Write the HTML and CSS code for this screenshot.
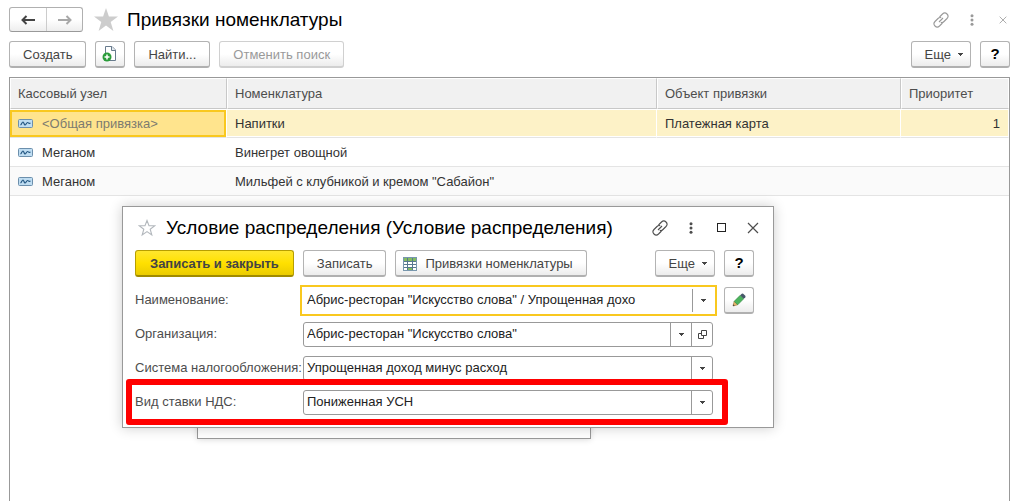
FILE: index.html
```html
<!DOCTYPE html>
<html lang="ru">
<head>
<meta charset="utf-8">
<meta name="viewport" content="width=device-width, initial-scale=1">
<title>Привязки номенклатуры</title>
<link rel="stylesheet" href="styles.css">
</head>
<body>
<svg class="sprite" aria-hidden="true">
  <symbol id="link" viewBox="0 0 16 16"><g fill="none" stroke="currentColor" stroke-width="1.1"><path d="M6.500 5 9.500 2Q11.800-.200 14 2T14 6.500L11 9.500Q9.500 11 7.800 10.300"/><path d="M9.500 11 6.500 14Q4.200 16.200 2 14T2 9.500L5 6.500Q6.500 5 8.200 5.700"/><path d="M6 10 10 6"/></g></symbol>
  <symbol id="dots" viewBox="0 0 4 12"><g fill="currentColor"><circle cx="2" cy="1.7" r="1.5"/><circle cx="2" cy="6" r="1.5"/><circle cx="2" cy="10.3" r="1.5"/></g></symbol>
  <symbol id="cross" viewBox="0 0 12 12"><path d="M1 1 11 11M11 1 1 11" fill="none" stroke="currentColor" stroke-width="1.2"/></symbol>
  <symbol id="caret" viewBox="0 0 5 3"><path d="M0 0H5V1H4V2H3V3H2V2H1V1H0Z" fill="currentColor"/></symbol>
  <symbol id="arrow" viewBox="0 0 14 10"><path d="M1 5H14M5.500 1 1.500 5 5.500 9" fill="none" stroke="currentColor" stroke-width="2"/></symbol>
  <symbol id="record" viewBox="0 0 15 9"><rect x=".5" y=".5" width="14" height="8" rx="1" fill="#bfddf2" stroke="#6c8fac"/><path d="M2.500 6C3.500 5.500 4 3 5 3S6 6 7 6 8.500 3.500 9.500 3.500 10.500 5 12.500 4" fill="none" stroke="#215581" stroke-width="1.200"/></symbol>
</svg>
<main class="page">
  <header class="titlebar">
    <div class="history">
      <button type="button" aria-label="Назад"><svg class="i-arrow"><use href="#arrow"/></svg></button>
      <button type="button" class="forward" aria-label="Вперед"><svg class="i-arrow"><use href="#arrow"/></svg></button>
    </div>
    <svg class="star" viewBox="0 0 24 24"><path d="M12 0 14.900 8.500H24L16.700 13.900 19.400 23 12 17.500 4.600 23 7.300 13.900 0 8.500H9.100Z" fill="#cdcdcd"/></svg>
    <h1>Привязки номенклатуры</h1>
    <div class="window-tools">
      <button type="button" aria-label="Ссылка"><svg class="i-link"><use href="#link"/></svg></button>
      <button type="button" aria-label="Меню"><svg class="i-dots"><use href="#dots"/></svg></button>
      <button type="button" aria-label="Закрыть"><svg class="i-small"><use href="#cross"/></svg></button>
    </div>
  </header>
  <div class="toolbar">
    <button type="button" class="btn">Создать</button>
    <button type="button" class="btn square" aria-label="Создать копированием"><svg class="i-copy" viewBox="0 0 16 16"><path d="M3.500.500H10L13.500 4V14.500H3.500Z" fill="#fff" stroke="#687b8d"/><path d="M9.500.500V4.500H13.500" fill="#e5ebf0" stroke="#687b8d"/><circle cx="5" cy="11" r="4.500" fill="#2a9c3a"/><path d="M2.500 11H7.500M5 8.500V13.500" stroke="#fff" stroke-width="1.500"/></svg></button>
    <button type="button" class="btn">Найти...</button>
    <button type="button" class="btn" disabled>Отменить поиск</button>
    <span class="spacer"></span>
    <button type="button" class="btn more">Еще<svg class="i-caret"><use href="#caret"/></svg></button>
    <button type="button" class="btn square help" aria-label="Справка">?</button>
  </div>
  <div class="list">
    <table>
      <colgroup><col class="c-node"><col class="c-item"><col class="c-object"><col></colgroup>
      <thead><tr><th>Кассовый узел</th><th>Номенклатура</th><th>Объект привязки</th><th>Приоритет</th></tr></thead>
      <tbody>
        <tr class="selected"><td class="active"><svg class="i-record"><use href="#record"/></svg>&lt;Общая привязка&gt;</td><td>Напитки</td><td>Платежная карта</td><td class="num">1</td></tr>
        <tr><td><svg class="i-record"><use href="#record"/></svg>Меганом</td><td>Винегрет овощной</td><td></td><td></td></tr>
        <tr class="even"><td><svg class="i-record"><use href="#record"/></svg>Меганом</td><td>Мильфей с клубникой и кремом "Сабайон"</td><td></td><td></td></tr>
      </tbody>
    </table>
  </div>
</main>

<div class="back-window"></div>
<section class="dialog" role="dialog" aria-labelledby="dialog-title">
  <header class="dialog-title">
    <svg class="star-small" viewBox="0 0 18 18"><path d="M9 1.500 11 6.800H16.800L12.200 10.200 13.800 16 9 12.600 4.200 16 5.800 10.200 1.200 6.800H7Z" fill="none" stroke="#b3b8bd" stroke-width="1.100"/></svg>
    <h2 id="dialog-title">Условие распределения (Условие распределения)</h2>
    <div class="window-tools">
      <button type="button" aria-label="Ссылка"><svg class="i-link"><use href="#link"/></svg></button>
      <button type="button" aria-label="Меню"><svg class="i-dots"><use href="#dots"/></svg></button>
      <button type="button" aria-label="Развернуть"><svg class="i-max" viewBox="0 0 9 9"><rect x=".5" y=".5" width="8" height="8" fill="none" stroke="#222"/></svg></button>
      <button type="button" aria-label="Закрыть"><svg class="i-cross"><use href="#cross"/></svg></button>
    </div>
  </header>
  <div class="toolbar">
    <button type="button" class="btn primary">Записать и закрыть</button>
    <button type="button" class="btn">Записать</button>
    <button type="button" class="btn with-icon"><svg class="i-sheet" viewBox="0 0 14 14"><rect x=".5" y=".5" width="13" height="13" fill="#fff" stroke="#7897ad"/><path d="M1 1H13V4H1Z" fill="#83bd60"/><path d="M5 10H9V13H5Z" fill="#83bd60"/><path d="M1 4.500H13M1 7.500H13M1 10.500H13M4.500 1V13M9.500 1V13" stroke="#58798f"/></svg>Привязки номенклатуры</button>
    <span class="spacer"></span>
    <button type="button" class="btn more">Еще<svg class="i-caret"><use href="#caret"/></svg></button>
    <button type="button" class="btn square help" aria-label="Справка">?</button>
  </div>
  <form class="form">
    <div class="row">
      <label for="name">Наименование:</label>
      <div class="field focused"><input id="name" type="text" value="Абрис-ресторан &quot;Искусство слова&quot; / Упрощенная дохо"><button type="button" aria-label="Выбрать"><svg class="i-caret"><use href="#caret"/></svg></button></div>
      <button type="button" class="btn square" aria-label="Изменить"><svg class="i-pencil" viewBox="0 0 14 14"><path d="M1 13 2.200 8.300 5.700 11.800Z" fill="#e9b96b" stroke="#9a7137" stroke-width=".6"/><path d="M1 13 1.500 11.300 2.700 12.500Z" fill="#333"/><path d="M2.200 8.300 8.200 2.300 11.700 5.800 5.700 11.800Z" fill="#4cb45d" stroke="#2f8540" stroke-width=".6"/><path d="M8.200 2.300 9.800.700Q10.500.200 11.200.700L13.300 2.800Q13.800 3.500 13.300 4.200L11.700 5.800Z" fill="#47586a"/></svg></button>
    </div>
    <div class="row">
      <label for="org">Организация:</label>
      <div class="field"><input id="org" type="text" value="Абрис-ресторан &quot;Искусство слова&quot;"><button type="button" aria-label="Выбрать"><svg class="i-caret"><use href="#caret"/></svg></button><button type="button" aria-label="Открыть"><svg class="i-open" viewBox="0 0 9 9"><path d="M3.500.500H8.500V5.500H3.500ZM3.500 3.500H.500V8.500H5.500V5.500" fill="none" stroke="#444"/></svg></button></div>
    </div>
    <div class="row">
      <label for="tax">Система налогообложения:</label>
      <div class="field"><input id="tax" type="text" value="Упрощенная доход минус расход"><button type="button" aria-label="Выбрать"><svg class="i-caret"><use href="#caret"/></svg></button></div>
    </div>
    <div class="row marked">
      <label for="vat">Вид ставки НДС:</label>
      <div class="field"><input id="vat" type="text" value="Пониженная УСН"><button type="button" aria-label="Выбрать"><svg class="i-caret"><use href="#caret"/></svg></button></div>
    </div>
  </form>
</section>
</body>
</html>
```
FILE: styles.css
```css
* { box-sizing: border-box; }
body { margin: 0; background: #fff; color: #333; font: 13px/16px "Liberation Sans", Arial, sans-serif; overflow: hidden; }
button, input { font: inherit; color: inherit; }
button { padding: 0; border: 0; background: none; }
svg { display: block; flex: none; }
h1, h2 { margin: 0; font-size: 19px; line-height: 24px; font-weight: 400; color: #000; white-space: nowrap; }
.sprite { position: absolute; width: 0; height: 0; }

.page { display: flex; flex-direction: column; height: 100vh; padding: 7px 8px 0 9px; }
.titlebar { display: flex; align-items: center; height: 25px; }
.history { display: flex; height: 25px; border: 1px solid #b0b0b0; border-bottom-color: #999; border-radius: 3px; background: linear-gradient(#fff 50%, #eee); }
.history button { display: grid; place-items: center; width: 36px; color: #444; }
.history .forward { border-left: 1px solid #ccc; color: #a8a8a8; }
.forward svg { transform: scaleX(-1); }
.star { width: 24px; height: 24px; margin: 0 9px 0 11px; }
.window-tools { display: flex; align-items: center; margin-left: auto; color: #4d4d4d; }
.window-tools button { display: grid; place-items: center; width: 31px; height: 24px; }
.titlebar .window-tools { color: #999; margin-right: -8px; }

.toolbar { display: flex; gap: 9px; }
.page .toolbar { margin-top: 9px; }
.spacer { flex: 1; }
.btn { display: flex; align-items: center; justify-content: center; flex: none; height: 27px; padding: 1px 13px 0; border: 1px solid #b3b3b3; border-bottom: 2px solid #b0b0b0; border-radius: 3px; background: linear-gradient(#fff 50%, #ececec); color: #444; white-space: nowrap; }
.btn:disabled { color: #999; border-color: #d0d0d0; }
.square { width: 30px; padding: 0; }
.help { color: #000; font-size: 15px; font-weight: 700; }
.more { gap: 7px; padding: 1px 7px 0 13px; }
.primary { padding: 1px 14px 0; border-color: #b79e00; border-bottom-color: #a08b00; background: linear-gradient(#ffe62e, #ffe000 50%, #ebcc00); font-weight: 700; }
.with-icon { gap: 8px; padding: 1px 13px 0 7px; }

.list { flex: 1; margin-top: 9px; border: 1px solid #999; border-bottom: 0; }
table { width: 100%; table-layout: fixed; border-collapse: separate; border-spacing: 0; }
.c-node { width: 217px; }
.c-item { width: 430px; }
.c-object { width: 244px; }
th, td { text-align: left; font-weight: 400; white-space: nowrap; }
th { height: 31px; border: 1px solid #fff; border-right-color: #c8c8c8; border-bottom-color: #c8c8c8; background: #f1f1f1; color: #4d4d4d; padding: 0 7px; }
th:last-child { border-right-color: #fff; }
td { height: 29px; padding: 2px 8px 0; border-bottom: 1px solid #e4e4e4; }
.selected td { border-right: 1px solid #fff; background: #fdf2c7; box-shadow: inset 0 1px #fff, inset 0 -1px #fff; }
.selected .active { background: #ffe48d; box-shadow: inset 0 1px #fff, inset 0 0 0 2px #f9c81f, inset 0 3px #f9c81f; color: #7d7b70; }
.even td { background: #fafafa; }
.num { text-align: right; }
.i-record { display: inline-block; width: 15px; height: 9px; margin-right: 9px; }

.back-window { position: absolute; left: 197px; top: 400px; width: 394px; height: 39px; border: 1px solid #999; background: #fff; box-shadow: 0 1px 6px #0002; }
.dialog { position: absolute; left: 122px; top: 206px; width: 652px; padding: 0 19px 8px 12px; border: 1px solid #999; background: #fff; box-shadow: 0 0 12px #0003; }
.dialog-title { display: flex; align-items: center; height: 43px; margin-right: -14px; padding-bottom: 2px; }
.star-small { width: 18px; height: 18px; margin: 0 10px 0 3px; }
.form { margin-top: 6px; }
.row { display: flex; align-items: center; height: 34px; }
.row label { flex: none; width: 168px; color: #4d4d4d; white-space: nowrap; }
.field { display: flex; flex: 1; height: 25px; margin-right: 41px; border: 1px solid #999; border-radius: 3px; background: #fff; }
.field input { flex: 1; min-width: 0; padding: 0 3px; border: 0; outline: 0; background: none; color: #222; }
.field button { display: grid; place-items: center; width: 21px; border-left: 1px solid #999; color: #444; }
.field.focused { height: 31px; margin: 0 7px 0 -3px; padding: 2px; border: 2px solid #f9c81f; border-radius: 0; }
.marked { position: relative; height: 46px; margin: -6px 26px -6px -9px; padding-left: 3px; border: 6px solid #f00; border-radius: 3px; }
.marked .field { margin-right: 9px; }

.i-arrow { width: 14px; height: 10px; }
.i-link { width: 16px; height: 16px; }
.i-dots { width: 4px; height: 12px; }
.i-small { width: 8px; height: 8px; }
.i-cross { width: 12px; height: 12px; }
.i-max { width: 9px; height: 9px; }
.i-caret { width: 5px; height: 3px; }
.i-copy { width: 16px; height: 16px; }
.i-sheet, .i-pencil { width: 14px; height: 14px; }
.i-open { width: 9px; height: 9px; }
```
